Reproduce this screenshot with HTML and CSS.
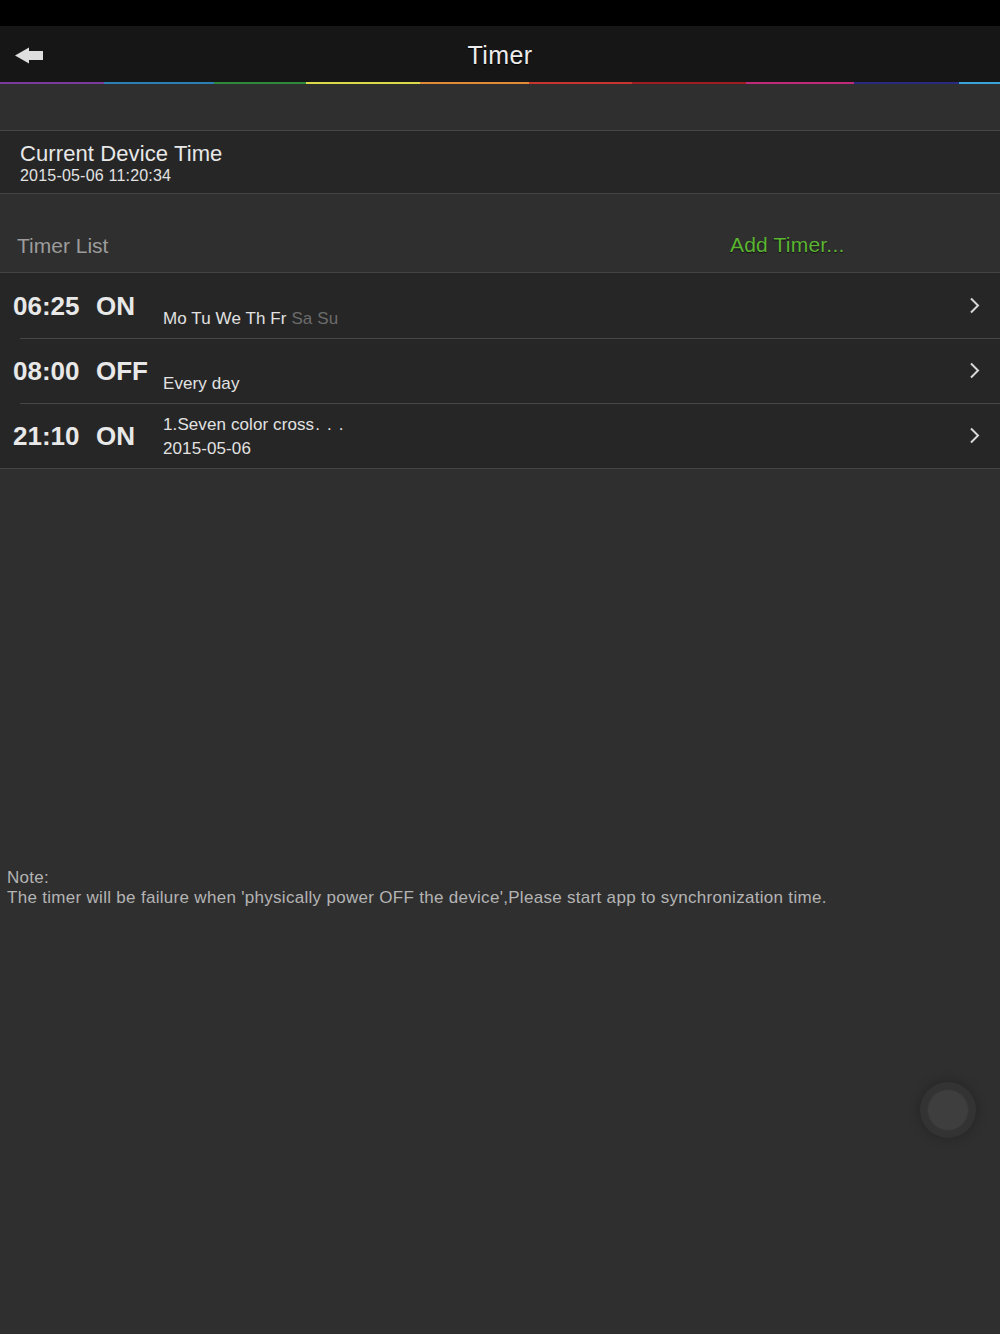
FILE: index.html
```html
<!DOCTYPE html>
<html>
<head>
<meta charset="utf-8">
<link rel="stylesheet" href="styles.css">
</head>
<body>
<div class="screen">
  <div class="status"></div>
  <header class="nav">
    <svg class="back" width="30" height="18" viewBox="0 0 30 18">
      <polygon points="0,8.5 14,0.5 14,4 28,4 28,13 14,13 14,16.5" fill="#dedede"/>
    </svg>
    <div class="title">Timer</div>
  </header>
  <div class="rainbow">
    <span class="c1"></span>
    <span class="c2"></span>
    <span class="c3"></span>
    <span class="c4"></span>
    <span class="c5"></span>
    <span class="c6"></span>
    <span class="c7"></span>
    <span class="c8"></span>
    <span class="c9"></span>
    <span class="c10"></span>
  </div>

  <section class="device">
    <div class="device-title">Current Device Time</div>
    <div class="device-date">2015-05-06 11:20:34</div>
  </section>

  <div class="list-head">
    <span class="list-label">Timer List</span>
    <span class="add">Add Timer...</span>
  </div>

  <ul class="timers">
    <li class="row">
      <div class="time"><span class="hm">06:25</span><span class="state">ON</span></div>
      <div class="sub">
        <div class="line"></div>
        <div class="line">Mo Tu We Th Fr <span class="off">Sa Su</span></div>
      </div>
      <svg class="chev" width="11" height="17" viewBox="0 0 11 17"><polyline points="2,1.5 9,8.5 2,15.5" fill="none" stroke="#d8d8d8" stroke-width="2"/></svg>
    </li>
    <li class="row">
      <div class="time"><span class="hm">08:00</span><span class="state">OFF</span></div>
      <div class="sub">
        <div class="line"></div>
        <div class="line">Every day</div>
      </div>
      <svg class="chev" width="11" height="17" viewBox="0 0 11 17"><polyline points="2,1.5 9,8.5 2,15.5" fill="none" stroke="#d8d8d8" stroke-width="2"/></svg>
    </li>
    <li class="row">
      <div class="time"><span class="hm">21:10</span><span class="state">ON</span></div>
      <div class="sub">
        <div class="line">1.Seven color cross<span class="ell">...</span></div>
        <div class="line">2015-05-06</div>
      </div>
      <svg class="chev" width="11" height="17" viewBox="0 0 11 17"><polyline points="2,1.5 9,8.5 2,15.5" fill="none" stroke="#d8d8d8" stroke-width="2"/></svg>
    </li>
  </ul>

  <div class="note">
    <div>Note:</div>
    <div>The timer will be failure when 'physically power OFF the device',Please start app to synchronization time.</div>
  </div>

  <div class="assist"><div class="assist-inner"></div></div>
</div>
</body>
</html>
```

FILE: styles.css
```css
* { box-sizing: border-box; }
html, body { margin: 0; padding: 0; }
body {
  background: #2f2f2f;
  font-family: "Liberation Sans", Arial, sans-serif;
  color: #e6e6e6;
}
.screen {
  position: relative;
  width: 1000px;
  height: 1334px;
  overflow: hidden;
  background: #2f2f2f;
}
.status { height: 26px; background: #000; }
.nav {
  position: relative;
  height: 56px;
  background: #161616;
  display: flex;
  align-items: center;
  justify-content: center;
}
.back { position: absolute; left: 15px; top: 21px; }
.title {
  font-size: 25px;
  letter-spacing: 0.4px;
  color: #ececec;
  text-shadow: 0 1px 1px #000;
  margin-top: 2px;
}
.rainbow { display: flex; height: 2px; background: #161616; }
.rainbow span { display: block; height: 2px; }
.c1 { width: 104px; background: #7a3a9a; }
.c2 { width: 110px; background: #2a7fb5; }
.c3 { width: 92px; background: #2e8a3a; }
.c4 { width: 114px; background: #d9d94a; }
.c5 { width: 109px; background: #e08a3a; }
.c6 { width: 103px; background: #c8352e; }
.c7 { width: 114px; background: #9e1c22; }
.c8 { width: 108px; background: #c02a7a; }
.c9 { width: 105px; background: #2a2a7e; }
.c10 { width: 41px; background: #3aa4d8; }

.device {
  margin-top: 46px;
  height: 64px;
  background: #262626;
  border-top: 1px solid #474747;
  border-bottom: 1px solid #444;
  padding: 11px 0 0 20px;
}
.device-title { font-size: 22px; line-height: 24px; color: #e8e8e8; letter-spacing: 0.1px; }
.device-date { font-size: 16px; line-height: 19px; color: #e2e2e2; letter-spacing: 0.2px; }

.list-head {
  height: 78px;
  display: flex;
  align-items: flex-end;
  padding: 0 0 14px 17px;
}
.list-label { font-size: 21px; color: #9c9c9c; width: 713px; }
.add {
  font-size: 21px;
  letter-spacing: 0.2px;
  color: #5cb531;
  text-shadow: 0 1px 1px #111;
  position: relative;
  top: -1px;
}

.timers {
  list-style: none;
  margin: 0;
  padding: 0;
  background: #262626;
  border-top: 1px solid #444;
  border-bottom: 1px solid #444;
}
.row {
  position: relative;
  height: 65px;
  display: flex;
  align-items: flex-start;
  padding-left: 13px;
  padding-right: 20px;
}
.row + .row::before {
  content: "";
  position: absolute;
  left: 20px;
  right: 0;
  top: 0;
  height: 1px;
  background: #474747;
}
.time {
  width: 150px;
  display: flex;
  font-size: 26px;
  font-weight: bold;
  line-height: 30px;
  color: #e8e8e8;
  margin-top: 18px;
}
.hm { width: 83px; }
.sub {
  padding-top: 10px;
  font-size: 17px;
  line-height: 24px;
  color: #e2e2e2;
  letter-spacing: 0.1px;
}
.line { height: 24px; white-space: nowrap; }
.off { color: #6c6c6c; }
.ell { letter-spacing: 7px; margin-left: 1px; }
.chev { margin-left: auto; align-self: center; }

.note {
  margin-top: 399px;
  padding-left: 7px;
  font-size: 17px;
  letter-spacing: 0.3px;
  line-height: 20px;
  color: #b4b4b4;
}

.assist {
  position: absolute;
  left: 920px;
  top: 1082px;
  width: 56px;
  height: 56px;
  border-radius: 50%;
  background: #333;
  box-shadow: 0 0 12px rgba(0,0,0,0.25);
  display: flex;
  align-items: center;
  justify-content: center;
}
.assist-inner {
  width: 42px;
  height: 42px;
  border-radius: 50%;
  background: #3e3e3e;
  border: 1px solid #363636;
}
```
